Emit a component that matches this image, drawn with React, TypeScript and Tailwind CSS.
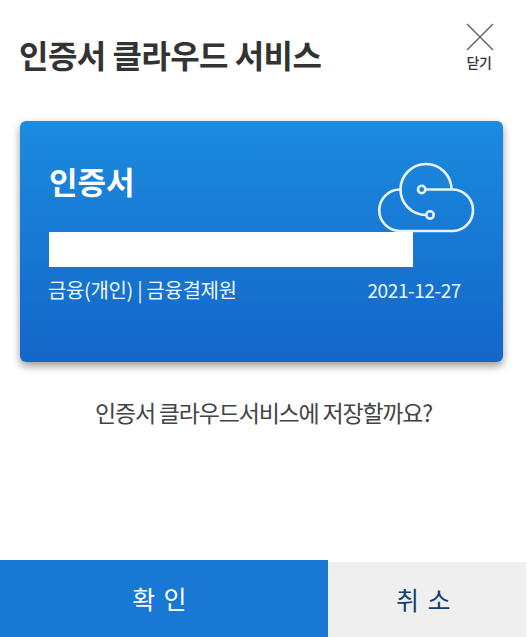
export default function App() {
  return (
    <div className="relative flex h-[637px] w-[527px] flex-col overflow-hidden bg-white font-['Noto_Sans_CJK_KR','Noto_Sans',sans-serif] text-[#333333]">
      <header className="flex h-[121px] shrink-0 items-start justify-between pl-[19px] pr-[33px]">
        <h1 className="mt-[30px] text-[32px] font-bold leading-[48px] tracking-[-0.55px] text-[#333333]">인증서 클라우드 서비스</h1>
        <button className="mt-[23px] flex w-[28px] flex-col items-center">
          <svg width="28" height="28" viewBox="0 0 28 28" fill="none" stroke="#666666" strokeWidth="1.5"><path d="M1 1 L27 27 M27 1 L1 27" /></svg>
          <span className="ml-[-2px] mt-[1px] whitespace-nowrap text-[14px] font-medium leading-[20px] tracking-[-0.3px] text-[#333333]">닫기</span>
        </button>
      </header>
      <div className="ml-[20px] flex h-[241px] w-[483px] shrink-0 flex-col rounded-[6px] bg-gradient-to-b from-[#1c8bdf] to-[#1466c8] pl-[29px] pr-[42px] shadow-[0_4px_8px_rgba(0,0,0,0.4)]">
        <div className="relative h-[111px]">
          <div className="pt-[37px] text-[31px] font-bold leading-[46px] text-white">인증서</div>
          <svg className="absolute left-[321px] top-[29px]" width="120" height="100" viewBox="0 0 120 100" fill="none" stroke="#e8f3fc" strokeWidth="2.6">
            <path d="M30 39.5 A20.75 20.75 0 0 0 30 81 H83 A20.75 20.75 0 0 0 81.5 39.5 H55.5" />
            <path d="M56 65 A25.5 25.5 0 1 1 81.5 39.5" />
            <circle cx="51.7" cy="39.5" r="3.7" />
            <circle cx="60" cy="65" r="3.7" />
          </svg>
        </div>
        <div className="h-[35px] w-[364px] bg-white" />
        <div className="mt-[9px] flex items-center justify-between text-[20px] leading-[28px] tracking-[-0.35px] text-[#eef6fd]">
          <span className="ml-[-1px]">금융(개인) | 금융결제원</span>
          <span className="text-[19px] tracking-[-0.4px]">2021-12-27</span>
        </div>
      </div>
      <p className="mt-[34px] text-center text-[23px] leading-[32px] tracking-[-1.2px] text-[#444444]">인증서 클라우드서비스에 저장할까요?</p>
      <footer className="mt-auto flex h-[77px] items-end">
        <button className="h-[77px] w-[328px] bg-[#1878d4] pr-[8px] text-[25px] tracking-[1.3px] text-white">확 인</button>
        <button className="mr-[1px] h-[75px] flex-1 bg-[#efefef] pr-[6px] text-[25px] tracking-[1.5px] text-[#123f6d]">취 소</button>
      </footer>
    </div>
  );
}
